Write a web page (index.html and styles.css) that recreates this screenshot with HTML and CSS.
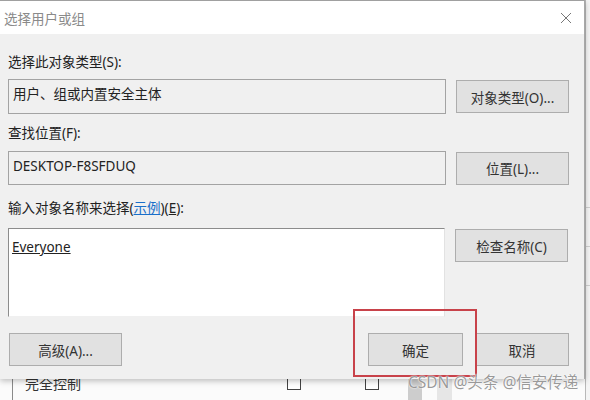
FILE: index.html
```html
<!DOCTYPE html>
<html lang="zh-CN">
<head>
  <meta charset="UTF-8" />
  <title>选择用户或组</title>
  <link rel="stylesheet" href="styles.css">
</head>
<body>

  <!-- 后面的权限窗口 -->
  <div class="ventana-fondo">
    <div class="fila-permiso">
      <span class="linea-izq"></span>
      <span class="permiso">完全控制</span>
      <span class="casilla c1"></span>
      <span class="casilla c2"></span>
      <span class="barra b1"></span>
      <span class="barra b2"></span>
    </div>
    <div class="borde-der">
      <span></span><span></span><span></span>
    </div>
  </div>

  <!-- 对话框 -->
  <div class="dialogo">
    <div class="titulo">
      <span>选择用户或组</span>
      <svg class="cerrar" width="12" height="12" viewBox="0 0 12 12">
        <path d="M1 1 L11 11 M11 1 L1 11" stroke="#777" stroke-width="1" fill="none" />
      </svg>
    </div>

    <div class="cuerpo">
      <div class="etiqueta e1">选择此对象类型(S):</div>
      <div class="fila">
        <div class="campo c-tipo">用户、组或内置安全主体</div>
        <button class="boton">对象类型(O)...</button>
      </div>

      <div class="etiqueta e2">查找位置(F):</div>
      <div class="fila">
        <div class="campo c-lugar">DESKTOP-F8SFDUQ</div>
        <button class="boton">位置(L)...</button>
      </div>

      <div class="etiqueta e3">输入对象名称来选择(<a href="#" class="enlace">示例</a>)(<u>E</u>):</div>
      <div class="fila arriba">
        <div class="area"><u>Everyone</u></div>
        <button class="boton b-check">检查名称(C)</button>
      </div>

      <div class="pie">
        <button class="boton">高级(A)...</button>
        <div class="pie-der">
          <button class="boton b-ok">确定</button>
          <button class="boton b-cancel">取消</button>
        </div>
      </div>
    </div>
  </div>

  <div class="marca-roja"></div>
  <div class="agua">CSDN @头条 @信安传递</div>

</body>
</html>
```

FILE: styles.css
```css
body {
  margin: 0;
  width: 590px;
  height: 400px;
  overflow: hidden;
  position: relative;
  background: #fbfbfb;
  font-family: "Noto Sans", "Noto Sans CJK SC", sans-serif;
  font-size: 13.5px;
  color: #222;
}

/* ventana de atrás */
.ventana-fondo {
  position: absolute;
  left: 0;
  top: 0;
  width: 590px;
  height: 400px;
}
.fila-permiso {
  position: absolute;
  left: 0;
  top: 372px;
  width: 590px;
  height: 28px;
}
.linea-izq {
  position: absolute;
  left: 12px;
  top: 0;
  width: 1px;
  height: 28px;
  background: #8a8a8a;
}
.permiso {
  position: absolute;
  left: 25px;
  top: 1px;
  font-size: 14px;
  color: #333;
}
.casilla {
  position: absolute;
  top: 4px;
  width: 12px;
  height: 12px;
  border: 1px solid #444;
  background: #fff;
}
.c1 { left: 287px; }
.c2 { left: 365px; }
.barra {
  position: absolute;
  top: 6px;
  height: 22px;
}
.b1 { left: 408px; width: 14px; background: #cdcdcd; }
.b2 { left: 437px; width: 15px; background: #e6e6e6; }
.borde-der {
  position: absolute;
  left: 585px;
  top: 0;
  width: 5px;
  height: 400px;
  background: #f4f4f4;
  border-left: 1px solid #b8b8b8;
}
.borde-der span {
  display: block;
  height: 38px;
  border-bottom: 1px solid #cfcfcf;
}
.borde-der span:first-child {
  height: 207px;
}

/* dialogo */
.dialogo {
  position: absolute;
  left: 0;
  top: 0;
  width: 584px;
  height: 378px;
  background: #f0f0f0;
  border-top: 1px solid #a0a0a0;
  border-right: 1px solid #a8a8a8;
  box-shadow: 0 2px 6px rgba(0, 0, 0, 0.25);
}
.titulo {
  height: 33px;
  background: #fff;
  display: flex;
  align-items: center;
  justify-content: space-between;
  padding: 0 12px 0 4px;
  color: #8a8a8a;
  font-size: 13.5px;
}
.cerrar {
  margin-top: 1px;
}
.cuerpo {
  padding: 19px 15px 0 8px;
}
.etiqueta {
  height: 18px;
  line-height: 18px;
}
.e1 { margin-bottom: 8px; }
.e2 { margin-top: 10px; margin-bottom: 9px; }
.e3 { margin-top: 14px; margin-bottom: 11px; }
.enlace {
  color: #1a6fc9;
}
.fila {
  display: flex;
  align-items: center;
  gap: 10px;
}
.fila.arriba {
  align-items: flex-start;
}
.campo {
  box-sizing: border-box;
  width: 438px;
  height: 35px;
  border: 1px solid #a3a3a3;
  background: #f0f0f0;
  padding: 5px 4px;
  line-height: 18px;
}
.c-lugar {
  height: 34px;
}
.area {
  box-sizing: border-box;
  width: 437px;
  height: 89px;
  background: #fff;
  border: 1px solid #8c8c8c;
  border-right-color: #e2e2e2;
  border-bottom-color: #f0f0f0;
  padding: 9px 3px;
  line-height: 18px;
}
.boton {
  box-sizing: border-box;
  width: 113px;
  height: 33px;
  background: #e1e1e1;
  border: 1px solid #adadad;
  font-family: inherit;
  font-size: 13.5px;
  color: #333;
  padding: 0;
}
.b-check {
  margin-top: 1px;
}
.pie {
  margin-top: 16px;
  display: flex;
  justify-content: space-between;
  padding-left: 1px;
}
.pie-der {
  display: flex;
  gap: 12px;
}
.b-ok {
  width: 95px;
}
.b-cancel {
  width: 94px;
}

/* anotaciones sobre la captura */
.marca-roja {
  position: absolute;
  left: 353px;
  top: 309px;
  width: 120px;
  height: 64px;
  border: 2px solid #c8424a;
}
.agua {
  position: absolute;
  left: 408px;
  top: 370px;
  font-size: 15.5px;
  color: rgba(120, 120, 120, 0.75);
  text-shadow: 0 0 2px #fff, 0 0 1px #fff;
  white-space: nowrap;
}
```
